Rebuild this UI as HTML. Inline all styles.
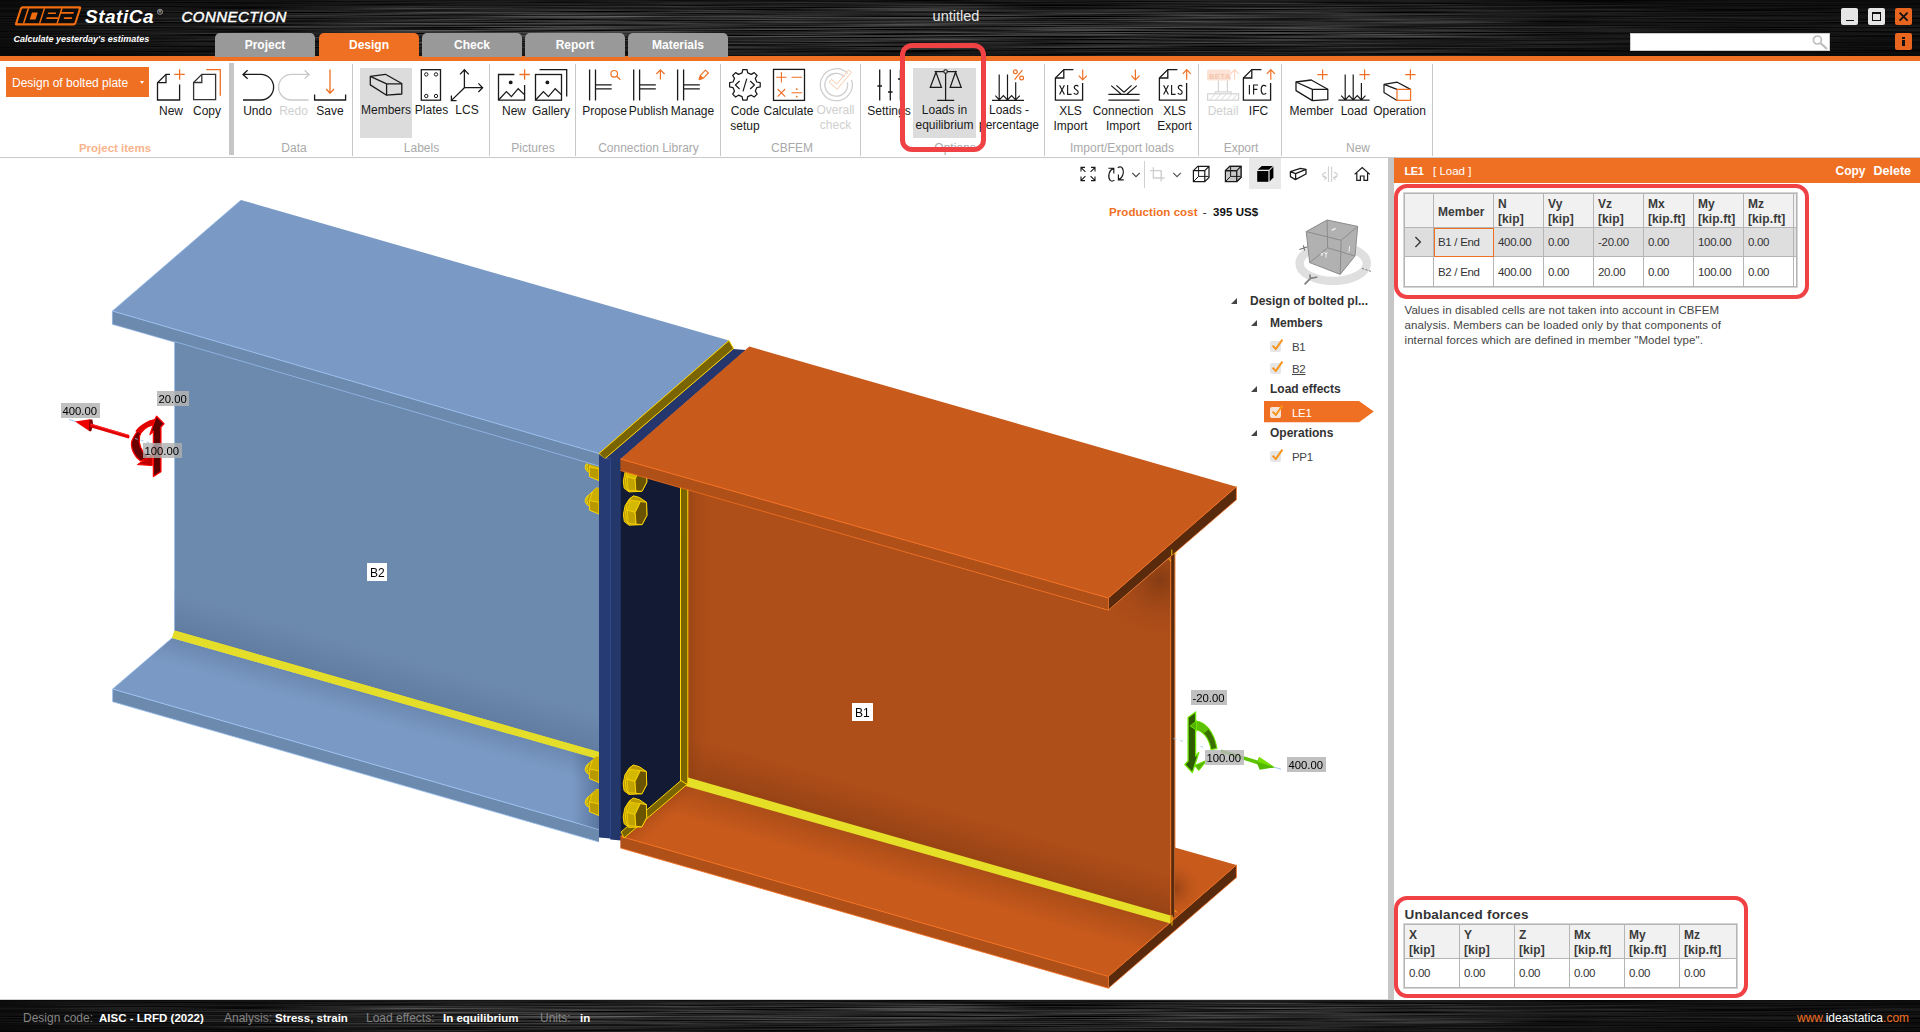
<!DOCTYPE html>
<html><head><meta charset="utf-8"><title>IDEA StatiCa Connection</title>
<style>
*{box-sizing:border-box;margin:0;padding:0}
html,body{width:1920px;height:1032px;overflow:hidden;background:#fff;font-family:"Liberation Sans",sans-serif;}
.abs{position:absolute}
#hdr{position:absolute;left:0;top:0;width:1920px;height:57px;background:#090909;
 background-image:
  repeating-linear-gradient(180deg,rgba(255,255,255,0) 0px,rgba(255,255,255,.085) 1px,rgba(255,255,255,0) 2px,rgba(255,255,255,.03) 3px,rgba(255,255,255,.07) 4px,rgba(255,255,255,0) 5px,rgba(255,255,255,.05) 6px,rgba(255,255,255,0) 7px,rgba(255,255,255,0) 8px,rgba(255,255,255,.1) 9px,rgba(255,255,255,0) 10px,rgba(255,255,255,0) 11px),
  radial-gradient(ellipse 560px 26px at 640px 24px,rgba(90,90,90,.5),rgba(20,20,20,0)),
  radial-gradient(ellipse 500px 20px at 1500px 30px,rgba(70,70,70,.35),rgba(20,20,20,0));}
#oline{position:absolute;left:0;top:56px;width:1920px;height:5px;background:#f07023}
.tab{position:absolute;top:33px;height:24px;width:100px;border-radius:5px 5px 0 0;background:#999;color:#fff;font-weight:bold;font-size:12px;text-align:center;line-height:24px}
.tab.on{background:#f07023}
#ribbon{position:absolute;left:0;top:61px;width:1920px;height:97px;background:#fff;border-bottom:1px solid #c9c9c9}
.sep{position:absolute;top:64px;width:1px;height:92px;background:#c8c8c8}
.glab{position:absolute;top:141px;height:14px;font-size:12px;line-height:14px;color:#a9a9a9;text-align:center;white-space:nowrap;transform:translateX(-50%)}
.rl{position:absolute;font-size:12px;color:#1a1a1a;text-align:center;white-space:nowrap;transform:translateX(-50%);line-height:15px}
.rl.dis{color:#cfcfcf}
#status{position:absolute;left:0;top:1000px;width:1920px;height:32px;background:#090909;
 background-image:
  repeating-linear-gradient(180deg,rgba(255,255,255,0) 0px,rgba(255,255,255,.085) 1px,rgba(255,255,255,0) 2px,rgba(255,255,255,.03) 3px,rgba(255,255,255,.07) 4px,rgba(255,255,255,0) 5px,rgba(255,255,255,.05) 6px,rgba(255,255,255,0) 7px,rgba(255,255,255,0) 8px,rgba(255,255,255,.1) 9px,rgba(255,255,255,0) 10px,rgba(255,255,255,0) 11px),
  radial-gradient(ellipse 560px 26px at 500px 16px,rgba(90,90,90,.5),rgba(20,20,20,0)),
  radial-gradient(ellipse 500px 20px at 1400px 18px,rgba(70,70,70,.35),rgba(20,20,20,0));}
#status span{position:absolute;top:10.5px;font-size:12px;white-space:nowrap;line-height:15px}
.sk{color:#858585}#status span.sv{color:#fff;font-weight:bold;font-size:11.5px}
#split{position:absolute;left:1388px;top:158px;width:6px;height:842px;background:#c6c6c6}
#phdr{position:absolute;left:1393.5px;top:158px;width:527px;height:24.5px;background:#f07023;color:#fff;font-size:12.5px;line-height:23px}
table.g{position:absolute;border-collapse:collapse;font-size:11.5px;letter-spacing:-.3px;color:#333;table-layout:fixed;border:1px solid #a6a6a6;box-shadow:0 0 0 1px #d4d4d4}
table.g td,table.g th{border:1px solid #b5b5b5;padding:0 0 0 4px;text-align:left;vertical-align:middle;overflow:hidden;white-space:nowrap}
table.g th{padding-top:2px;background:#f1f1f1;font-weight:bold;color:#3a3a3a;line-height:15px;font-size:12px;letter-spacing:.1px}
.redbox{position:absolute;border:3px solid #f04144;border-radius:12px}
.tree{position:absolute;font-size:12px;color:#333;white-space:nowrap;line-height:15px}
.tree.r{font-size:11.5px;letter-spacing:-.3px;color:#444}
.tree.b{font-weight:bold}
.tri{position:absolute;width:0;height:0;border-left:6px solid transparent;border-bottom:6px solid #444}
.cb{position:absolute;width:11px;height:11px;background:#e6e6e6;border-radius:2px}
</style></head><body>

<!-- HEADER -->
<div id="hdr"></div>

<!--HDR-START-->
<svg class="abs" style="left:0;top:0" width="1920" height="57" viewBox="0 0 1920 57">
<defs><filter id="brush" x="0" y="0" width="100%" height="100%" color-interpolation-filters="sRGB"><feTurbulence type="fractalNoise" baseFrequency="0.006 0.8" numOctaves="2" seed="7" result="n"/><feColorMatrix in="n" type="matrix" values="0.62 0 0 0 -0.15  0.62 0 0 0 -0.15  0.62 0 0 0 -0.15  0 0 0 0 1"/></filter>
<linearGradient id="hfade" x1="0" y1="0" x2="1" y2="0"><stop offset="0" stop-color="#050505" stop-opacity=".75"/><stop offset=".1" stop-color="#050505" stop-opacity=".45"/><stop offset=".22" stop-color="#050505" stop-opacity="0"/><stop offset=".7" stop-color="#050505" stop-opacity="0"/><stop offset=".82" stop-color="#050505" stop-opacity=".5"/><stop offset="1" stop-color="#050505" stop-opacity=".7"/></linearGradient>
<linearGradient id="vfade" x1="0" y1="0" x2="0" y2="1"><stop offset="0" stop-color="#050505" stop-opacity=".55"/><stop offset=".25" stop-color="#050505" stop-opacity="0"/><stop offset=".65" stop-color="#050505" stop-opacity="0"/><stop offset="1" stop-color="#050505" stop-opacity=".6"/></linearGradient></defs>
<rect width="1920" height="57" filter="url(#brush)"/><rect width="1920" height="57" fill="url(#hfade)"/><rect width="1920" height="57" fill="url(#vfade)"/></svg>
<svg class="abs" style="left:0;top:0" width="320" height="56" viewBox="0 0 320 56">
<g transform="translate(0,25.4) skewX(-18) translate(0,-25.4)">
<rect x="14.4" y="6.3" width="61.2" height="19.1" rx="2.2" fill="#f26d0f"/>
<rect x="16.6" y="8.5" width="56.9" height="14.7" rx="1" fill="#0c0c0c"/>
<rect x="22.1" y="8.3" width="1.6" height="15.1" fill="#f26d0f"/>
<rect x="27.8" y="12.6" width="5.8" height="6.8" fill="#f26d0f"/>
<rect x="38.2" y="8.3" width="1.5" height="15.1" fill="#f26d0f"/>
<rect x="44" y="12.4" width="8" height="1.7" fill="#f26d0f"/>
<rect x="44" y="17.2" width="11.8" height="1.7" fill="#f26d0f"/>
<rect x="55.6" y="8.3" width="1.6" height="15.1" fill="#f26d0f"/>
<rect x="57" y="12" width="12.6" height="1.7" fill="#f26d0f"/>
<rect x="61.6" y="17.2" width="8" height="1.7" fill="#f26d0f"/>
</g>
<text x="85" y="22.8" font-family="Liberation Sans, sans-serif" font-weight="bold" font-style="italic" font-size="19" fill="#fff" letter-spacing=".5">StatiCa</text>
<circle cx="160" cy="11.8" r="2.6" fill="none" stroke="#aaa" stroke-width=".8"/><text x="158.6" y="13.4" font-family="Liberation Sans, sans-serif" font-size="4" fill="#aaa" font-weight="bold">R</text>
<text x="181.5" y="21.6" font-family="Liberation Sans, sans-serif" font-style="italic" font-size="15" fill="#fff" stroke="#fff" stroke-width=".45" letter-spacing=".45">CONNECTION</text>
<text x="13.5" y="42.3" font-family="Liberation Sans, sans-serif" font-weight="bold" font-style="italic" font-size="9" fill="#fff">Calculate yesterday's estimates</text>
</svg>
<!-- window buttons -->
<div class="abs" style="left:1841px;top:8px;width:17px;height:17px;background:#e6e6e6;border-radius:2px"></div>
<div class="abs" style="left:1845.5px;top:19.5px;width:8.5px;height:1.6px;background:#111"></div>
<div class="abs" style="left:1868px;top:8px;width:17px;height:17px;background:#e6e6e6;border-radius:2px"></div>
<div class="abs" style="left:1872px;top:12px;width:9px;height:9px;border:1.2px solid #111;border-top-width:2.2px"></div>
<div class="abs" style="left:1895px;top:8px;width:17px;height:17px;background:#e8651f;border-radius:2px"></div>
<svg class="abs" style="left:1895px;top:8px" width="17" height="17"><path d="M4.6,4.6L12.6,12.6M12.6,4.6L4.6,12.6" stroke="#111" stroke-width="1.8"/></svg>
<div class="abs" style="left:1895px;top:33px;width:17px;height:17px;background:#e8651f;border-radius:2px"></div>
<div class="abs" style="left:1902.3px;top:36.6px;width:2.5px;height:2.3px;background:#111"></div>
<div class="abs" style="left:1902.3px;top:40.2px;width:2.5px;height:6px;background:#111"></div>
<div class="abs" style="left:1630px;top:33px;width:200px;height:17.5px;background:#fff;border:1px solid #ccc"></div>
<svg class="abs" style="left:1810px;top:33px" width="20" height="18"><circle cx="7.4" cy="7" r="4" fill="none" stroke="#bdbdbd" stroke-width="1.7"/><path d="M10.4,10L17,16" stroke="#bdbdbd" stroke-width="2.2"/></svg>
<!--HDR-END-->
<div id="oline"></div>
<div class="tab" style="left:215px">Project</div>
<div class="tab on" style="left:319px">Design</div>
<div class="tab" style="left:422px">Check</div>
<div class="tab" style="left:525px">Report</div>
<div class="tab" style="left:628px">Materials</div>
<div class="abs" style="left:906px;top:7px;width:100px;text-align:center;color:#e8e8e8;font-size:14.5px;line-height:18px">untitled</div>
<!-- RIBBON -->
<div id="ribbon"></div>
<!--RIB-START-->
<!-- ribbon backgrounds -->
<div class="abs" style="left:6px;top:67px;width:143px;height:30px;background:#f07023"></div>
<div class="abs" style="left:12px;top:75px;color:#fff;font-size:12px;line-height:16px;white-space:nowrap">Design of bolted plate</div>
<div class="abs" style="left:139.5px;top:81px;width:0;height:0;border-left:2.5px solid transparent;border-right:2.5px solid transparent;border-top:3px solid #fff"></div>
<div class="abs" style="left:229px;top:63px;width:5px;height:92px;background:#c6c6c6"></div>
<div class="abs" style="left:360px;top:68px;width:52px;height:70px;background:#dcdcdc"></div>
<div class="abs" style="left:913px;top:68px;width:63px;height:70px;background:#dcdcdc"></div>
<div class="sep" style="left:352px"></div><div class="sep" style="left:489px"></div><div class="sep" style="left:575px"></div>
<div class="sep" style="left:720px"></div><div class="sep" style="left:860px"></div><div class="sep" style="left:1044px"></div>
<div class="sep" style="left:1198px"></div><div class="sep" style="left:1281px"></div><div class="sep" style="left:1432px"></div>
<!-- group labels -->
<div class="glab" style="left:115px;color:#f8b48c;font-weight:bold;font-size:11.5px">Project items</div>
<div class="glab" style="left:294px">Data</div><div class="glab" style="left:421.5px">Labels</div><div class="glab" style="left:533px">Pictures</div>
<div class="glab" style="left:648.5px">Connection Library</div><div class="glab" style="left:792px">CBFEM</div><div class="glab" style="left:955px">Options</div>
<div class="glab" style="left:1122px">Import/Export loads</div><div class="glab" style="left:1241px">Export</div><div class="glab" style="left:1358px">New</div>
<!-- button labels -->
<div class="rl" style="left:171px;top:104px">New</div><div class="rl" style="left:207px;top:104px">Copy</div>
<div class="rl" style="left:257.5px;top:104px">Undo</div><div class="rl dis" style="left:293.5px;top:104px">Redo</div><div class="rl" style="left:330px;top:104px">Save</div>
<div class="rl" style="left:386px;top:103px">Members</div><div class="rl" style="left:431.5px;top:103px">Plates</div><div class="rl" style="left:467px;top:103px">LCS</div>
<div class="rl" style="left:514px;top:104px">New</div><div class="rl" style="left:551px;top:104px">Gallery</div>
<div class="rl" style="left:604.5px;top:104px">Propose</div><div class="rl" style="left:648.5px;top:104px">Publish</div><div class="rl" style="left:692.5px;top:104px">Manage</div>
<div class="rl" style="left:745px;top:104px">Code<br>setup</div><div class="rl" style="left:788.5px;top:104px">Calculate</div><div class="rl dis" style="left:835.5px;top:103px">Overall<br>check</div>
<div class="rl" style="left:889px;top:104px">Settings</div><div class="rl" style="left:944.5px;top:103px">Loads in<br>equilibrium</div><div class="rl" style="left:1009px;top:103px">Loads -<br>percentage</div>
<div class="rl" style="left:1070.5px;top:104px">XLS<br>Import</div><div class="rl" style="left:1123px;top:104px">Connection<br>Import</div><div class="rl" style="left:1174.5px;top:104px">XLS<br>Export</div>
<div class="rl dis" style="left:1223px;top:104px">Detail</div><div class="rl" style="left:1258.5px;top:104px">IFC</div>
<div class="rl" style="left:1311.5px;top:104px">Member</div><div class="rl" style="left:1354px;top:104px">Load</div><div class="rl" style="left:1399.5px;top:104px">Operation</div>
<!-- icons -->
<svg class="abs" style="left:0;top:61px" width="1920" height="97" viewBox="0 61 1920 97" fill="none" stroke="#1a1a1a" stroke-width="1.3" stroke-linecap="butt" stroke-linejoin="miter">
<g id="ic-new"><path d="M170,74.4H166L157.5,82.7V100H179.6V84.5"/><path d="M166,74.4V82.7H157.5"/><path d="M174.4,74.4H184.8M179.6,69.3V79.7" stroke="#f07023"/></g>
<g id="ic-copy"><path d="M201.8,74.4H215.6V99.6H193.6V82.5Z" stroke="#333"/><path d="M201.8,74.4V82.5H193.6" stroke="#333"/><path d="M206.3,69.6H220.3V95.8" stroke="#f07023"/></g>
<g id="ic-undo"><path d="M247.6,70.2L243,74.4L247.6,78.8M243,74.4H260.8A12.8,12.8 0 0 1 260.8,100H243"/></g>
<g id="ic-redo" stroke="#c9c9c9"><path d="M304.6,70.2L309.2,74.4L304.6,78.8M309.2,74.4H291.4A12.8,12.8 0 0 0 291.4,100H308.6"/></g>
<g id="ic-save"><path d="M314.6,94.6V100H345.6V94.6"/><path d="M330,69.4V93M326.2,89L330,93.2L334,89" stroke="#f07023"/></g>
<g id="ic-members" stroke-linejoin="round"><path d="M370.3,76.4L385.4,74.3L401.8,83.5V94L386.6,95.2L370.3,84.9Z"/><path d="M370.3,76.4L386.6,83.8H401.8M386.6,83.8V95.2"/></g>
<g id="ic-plates"><rect x="421.3" y="69.7" width="19.2" height="30.5"/><circle cx="426.3" cy="74.4" r="1.7" stroke-width="1"/><circle cx="436" cy="74.4" r="1.7" stroke-width="1"/><circle cx="426.3" cy="96" r="1.7" stroke-width="1"/><circle cx="436" cy="96" r="1.7" stroke-width="1"/></g>
<g id="ic-lcs"><path d="M464.4,87.7V69.8M460,74.4L464.4,69.7L468.8,74.4M464.4,87.7H482.4M478.4,83.4L482.6,87.7L478.4,92M464.4,87.7L451.5,100.4M451.4,95.6V100.6H456.6"/></g>
<g id="ic-picnew"><path d="M514.4,74.5H498.5V100.2H524.6V85"/><circle cx="510.7" cy="82.4" r="1.9" fill="#1a1a1a" stroke="none"/><path d="M498.8,99.8L506.4,91.6L511.4,96.6L518.2,88.7L524.4,94.6"/><path d="M519.4,74.5H529.8M524.6,69.3V79.8" stroke="#f07023"/></g>
<g id="ic-gallery"><rect x="535.5" y="74.5" width="26" height="25.7"/><circle cx="547.4" cy="82.4" r="1.9" fill="#1a1a1a" stroke="none"/><path d="M535.8,99.8L543.4,91.6L548.4,96.6L555.2,88.7L561.4,94.6"/><path d="M539.6,69.7H566.7V96.6"/></g>
<g id="ic-propose"><path d="M589.6,69.5V100.6M595.5,69.5V100.6M595.5,84.8H611.7M595.5,88.8H611.7"/><circle cx="614.2" cy="73.8" r="3.3" stroke="#f07023" stroke-width="1.2"/><path d="M616.6,76.2L620.4,79.8" stroke="#f07023" stroke-width="1.2"/></g>
<g id="ic-publish"><path d="M633.7,69.5V100.6M639.6,69.5V100.6M639.6,84.8H655.8M639.6,88.8H655.8"/><path d="M660.4,79.6V70M656.4,74L660.4,69.8L664.6,74" stroke="#f07023" stroke-width="1.2"/></g>
<g id="ic-manage"><path d="M677.6,69.5V100.6M683.6,69.5V100.6M683.6,84.8H699.8M683.6,88.8H699.8"/><path d="M699,79.6L700.2,75.6L705.4,70.2L708.4,73L703,78.4ZM700.2,75.6L703,78.4" stroke="#f07023" stroke-width="1.1" stroke-linejoin="round"/><path d="M699,79.6L700.2,75.6L703,78.4Z" fill="#f07023" stroke="none"/></g>
<g id="ic-code" stroke-linejoin="round"><path d="M742.1,72.9L742.8,69.5L747.0,69.5L747.7,72.9L751.3,74.4L754.2,72.6L757.1,75.5L755.3,78.4L756.8,82.0L760.2,82.7L760.2,86.9L756.8,87.6L755.3,91.2L757.1,94.1L754.2,97.0L751.3,95.2L747.7,96.7L747.0,100.1L742.8,100.1L742.1,96.7L738.5,95.2L735.6,97.0L732.7,94.1L734.5,91.2L733.0,87.6L729.6,86.9L729.6,82.7L733.0,82.0L734.5,78.4L732.7,75.5L735.6,72.6L738.5,74.4Z" stroke-width="1.25"/><path d="M739.6,81L735.4,85L739.6,89M750.2,81L754.4,85L750.2,89M746.8,78.6L743,91.4" stroke-width="1.2"/></g>
<g id="ic-calc"><rect x="773.5" y="69.4" width="31" height="31"/><path d="M776.2,77.2H786.6M781.4,72V82.4M791.6,77.2H802M777.6,89L785.2,96.6M785.2,89L777.6,96.6M791.6,92.8H802" stroke="#f07023" stroke-width="1.1"/><circle cx="796.8" cy="89.2" r=".9" fill="#f07023" stroke="none"/><circle cx="796.8" cy="96.6" r=".9" fill="#f07023" stroke="none"/></g>
<g id="ic-overall" stroke="#cfcfcf"><path d="M847.6,73.4A16,16 0 1 0 851.6,80"/><path d="M844.4,76.8A11.4,11.4 0 1 0 847.4,82.4"/><path d="M829.2,82.2L837.2,89.2L851.4,72.4L848.6,70L836.8,84L831.6,79.4Z" stroke="#f9c9ac" stroke-width="1"/></g>
<g id="ic-settings"><path d="M879.7,69.4V100.4M890.3,69.4V100.4M900.4,69.4V100.4M877.4,86H882M888,92H892.6M898,79H902.6"/></g>
<g id="ic-equil" stroke-width="1.25"><path d="M945.6,73.4V100.2M937.2,100.4H954.2M934.6,71.6H943.8M947.4,71.6H956.8"/><circle cx="945.6" cy="71.6" r="1.8" stroke-width="1.1"/><path d="M936,72.2L930.3,87.4H941.4ZM955.5,72.2L950.2,87.4H961.2Z" stroke-linejoin="miter"/></g>
<g id="ic-loadpct"><path d="M992,100.4H1024M999.2,74.4V99.6M1007.5,74.4V99.6M1015.7,82.2V99.6M995.4,95.6L999.2,99.8L1003.4,95.6L1007.5,99.8L1011.6,95.6L1015.7,99.8L1019.8,95.6" stroke-width="1.2"/><path d="M1022.4,70.2L1014.6,79.6" stroke="#f07023" stroke-width="1.2"/><circle cx="1015.4" cy="71.8" r="1.9" stroke="#f07023" stroke-width="1.2"/><circle cx="1021.6" cy="78" r="1.9" stroke="#f07023" stroke-width="1.2"/></g>
<g id="ic-xlsimp"><path d="M1073.4,69.6H1063.8L1055.4,78V100.2H1082.6V83"/><path d="M1063.8,69.6V78H1055.4"/><path d="M1082.7,69.6V79.4M1078.8,75.6L1082.7,79.8L1086.8,75.6" stroke="#f07023" stroke-width="1.2"/><path d="M1059.6,85.2L1064.4,94.4M1064.4,85.2L1059.6,94.4M1067.6,85V94.4H1071.6M1078.4,86.4Q1077,85 1075.4,85.6Q1073.6,86.6 1074.6,88.4L1077.8,91Q1078.8,93.4 1076.6,94.2Q1075,94.6 1073.8,93.2" stroke-width="1.15"/></g>
<g id="ic-connimp"><path d="M1108.4,94.4H1139.6M1108.4,100.2H1139.6M1111.2,85.6L1121,94M1116.4,85.4L1124,92.2M1136.8,85.6L1127,94M1131.6,85.4L1124,92.2" stroke-width="1.2"/><path d="M1135.4,69.6V79.4M1131.4,75.6L1135.4,79.8L1139.6,75.6" stroke="#f07023" stroke-width="1.2"/></g>
<g id="ic-xlsexp"><path d="M1177.4,69.6H1167.8L1159.4,78V100.2H1186.6V83"/><path d="M1167.8,69.6V78H1159.4"/><path d="M1186.7,79.8V70M1182.8,73.8L1186.7,69.6L1190.8,73.8" stroke="#f07023" stroke-width="1.2"/><path d="M1163.6,85.2L1168.4,94.4M1168.4,85.2L1163.6,94.4M1171.6,85V94.4H1175.6M1182.4,86.4Q1181,85 1179.4,85.6Q1177.6,86.6 1178.6,88.4L1181.8,91Q1182.8,93.4 1180.6,94.2Q1179,94.6 1177.8,93.2" stroke-width="1.15"/></g>
<g id="ic-detail" stroke="#d6d6d6"><rect x="1207" y="69.4" width="24" height="11" rx="2" fill="#fbe3d6" stroke="none"/><path d="M1234.6,79.8V70M1230.8,73.8L1234.6,69.6L1238.6,73.8" stroke="#fbd3bd" stroke-width="1.1"/><path d="M1218.4,80.6V91.6M1227.4,80.6V91.6M1215,91.8H1231V93.6M1215,91.8V93.6"/><rect x="1207.6" y="93.8" width="31" height="6.4"/><path d="M1210,100L1215,94M1215.6,100L1220.6,94M1221.2,100L1226.2,94M1226.8,100L1231.8,94M1232.4,100L1237.4,94" stroke-width=".9"/></g>
<g id="ic-ifc"><path d="M1261.4,69.6H1251.8L1243.4,78V100.2H1270.6V83"/><path d="M1251.8,69.6V78H1243.4"/><path d="M1270.8,79.8V70M1266.8,73.8L1270.8,69.6L1274.8,73.8" stroke="#f07023" stroke-width="1.2"/><path d="M1249.4,85V94.4M1253.6,94.4V85H1258M1253.6,89.4H1257.4M1266.2,86.4Q1264.8,85 1263.2,85.4Q1261.2,86.2 1261.2,89.6Q1261.2,93.4 1263.2,94.2Q1264.8,94.6 1266.2,93.2" stroke-width="1.15"/></g>
<g id="ic-member2" stroke-linejoin="round"><path d="M1296,82L1311.2,80L1327.8,89.2V99.6L1312.4,100.6L1296,90.6Z"/><path d="M1296,82L1312.4,89.4H1327.8M1312.4,89.4V100.6"/><path d="M1317.4,74.6H1327.8M1322.6,69.4V79.8" stroke="#f07023" stroke-width="1.2"/></g>
<g id="ic-load2"><path d="M1338.4,100.2H1369.6M1345.2,74.6V99.6M1353.2,74.6V99.6M1361.4,83V99.6M1341.2,95.6L1345.2,99.8L1349.2,95.6L1353.2,99.8L1357.3,95.6L1361.4,99.8L1365.5,95.6" stroke-width="1.2"/><path d="M1359.4,74.6H1369.8M1364.6,69.4V79.8" stroke="#f07023" stroke-width="1.2"/></g>
<g id="ic-oper" stroke-linejoin="round"><path d="M1397,89.4L1384,84.4V92.4L1397,100.4M1384,84.4L1397.2,82.2L1410.6,89.4" stroke-width="1.2"/><rect x="1397" y="89.4" width="13.6" height="11" stroke="#f07023" stroke-width="1.2"/><path d="M1405.2,74.6H1415.6M1410.4,69.4V79.8" stroke="#f07023" stroke-width="1.2"/></g>
<text x="1209" y="78.6" font-family="Liberation Sans, sans-serif" font-size="7.5" font-weight="bold" fill="#f3c4ab" stroke="none" letter-spacing=".4">BETA</text>
</svg>
<div class="redbox" style="left:900px;top:43px;width:86px;height:109px;border-width:5px;border-radius:12px"></div>
<!--RIB-END-->

<!-- VIEWPORT / SCENE -->
<div id="scene" class="abs" style="left:0;top:158px;width:1388px;height:842px;background:#fff;border-bottom:1px solid #d0d0d0"></div>

<!--SCENE-START-->
<svg class="abs" style="left:0;top:158px" width="1388" height="842" viewBox="0 158 1388 842" shape-rendering="geometricPrecision">
<defs>
<linearGradient id="gBweb" gradientUnits="userSpaceOnUse" x1="410" y1="660" x2="400" y2="695"><stop offset="0" stop-color="#6c89ae"/><stop offset="1" stop-color="#627da2"/></linearGradient>
<linearGradient id="gBfl" gradientUnits="userSpaceOnUse" x1="400" y1="702" x2="393" y2="727"><stop offset="0" stop-color="#6b88b0"/><stop offset="1" stop-color="#7a9ac5"/></linearGradient>
<linearGradient id="gOweb" gradientUnits="userSpaceOnUse" x1="911" y1="800" x2="900" y2="838"><stop offset="0" stop-color="#ae4e19"/><stop offset="1" stop-color="#984315"/></linearGradient>
<linearGradient id="gOfl" gradientUnits="userSpaceOnUse" x1="900" y1="847" x2="891" y2="878"><stop offset="0" stop-color="#ac4d18"/><stop offset="1" stop-color="#c85a1c"/></linearGradient>
<linearGradient id="gOwebL" gradientUnits="userSpaceOnUse" x1="688" y1="0" x2="712" y2="0"><stop offset="0" stop-color="#8f3f13" stop-opacity=".6"/><stop offset="1" stop-color="#ae4e19" stop-opacity="0"/></linearGradient>
<linearGradient id="gOflD" gradientUnits="userSpaceOnUse" x1="654" y1="809" x2="668" y2="826"><stop offset="0" stop-color="#a04615" stop-opacity=".8"/><stop offset="1" stop-color="#c85a1c" stop-opacity="0"/></linearGradient>
<radialGradient id="gSh1" gradientUnits="userSpaceOnUse" cx="1160" cy="580" r="62"><stop offset="0" stop-color="#7c3711" stop-opacity=".8"/><stop offset="1" stop-color="#ae4e19" stop-opacity="0"/></radialGradient>
<radialGradient id="gSh2" gradientUnits="userSpaceOnUse" cx="1174" cy="888" r="30"><stop offset="0" stop-color="#8a3d13" stop-opacity=".85"/><stop offset="1" stop-color="#c85a1c" stop-opacity="0"/></radialGradient>

<linearGradient id="gBsh" gradientUnits="userSpaceOnUse" x1="572" y1="0" x2="599" y2="0"><stop offset="0" stop-color="#3a5278" stop-opacity="0"/><stop offset="1" stop-color="#3a5278" stop-opacity=".5"/></linearGradient>
</defs>
<!-- BLUE BEAM B2 -->
<polygon points="241,200 729,340.5 599,453.5 112.4,311" fill="#7a9ac5"/>
<polygon points="112.4,311 599,453.5 599,467 174.5,342 112.4,324.3" fill="#6c89ae"/>
<polygon points="174.5,341 599,466 599,756 174.5,631" fill="#6c89ae"/>
<polygon points="174.5,590 599,711 599,756 174.5,631" fill="url(#gBweb)"/>
<g transform="translate(585,454.4)"><path d="M11.3,0 L14,0.4 L14,26.2 L4.4,22.2 L4.4,17.9 L2.2,17 L0,13.5 L1.3,9.2 L7.4,3.9 Z" fill="#b89a00" stroke="#ffd800" stroke-width="1" stroke-linejoin="round"/>
<polygon points="7.4,3.9 11.3,0 14,0.4 14,14.4 4.4,12.6" fill="#ccae00"/>
<path d="M4.4,12.6 L14,14.4 M7.4,3.9 L4.4,12.6 L4.4,17.9" fill="none" stroke="#ffd800" stroke-width=".8"/>
<path d="M3.4,7.6 L1.8,12 L2.8,16" fill="none" stroke="#e0e020" stroke-width="1"/></g><g transform="translate(585,487.9)"><path d="M11.3,0 L14,0.4 L14,26.2 L4.4,22.2 L4.4,17.9 L2.2,17 L0,13.5 L1.3,9.2 L7.4,3.9 Z" fill="#b89a00" stroke="#ffd800" stroke-width="1" stroke-linejoin="round"/>
<polygon points="7.4,3.9 11.3,0 14,0.4 14,14.4 4.4,12.6" fill="#ccae00"/>
<path d="M4.4,12.6 L14,14.4 M7.4,3.9 L4.4,12.6 L4.4,17.9" fill="none" stroke="#ffd800" stroke-width=".8"/>
<path d="M3.4,7.6 L1.8,12 L2.8,16" fill="none" stroke="#e0e020" stroke-width="1"/></g>
<polygon points="112.4,311 599,453.5 599,467 174.5,342 112.4,324.3" fill="#6c89ae"/>
<polygon points="174.5,630.5 599,752 599,759.5 172,638" fill="#e4de2a"/>
<polyline points="112.4,311 599,453.5" fill="none" stroke="#9cc0ee" stroke-width="1"/>
<polyline points="174.5,341.5 599,466" fill="none" stroke="#8db2e2" stroke-width="1"/>
<polygon points="172,638 599,759 599,829.5 112.6,689" fill="url(#gBfl)"/>
<polygon points="112.6,689 599,829.5 599,842 112.6,701.7" fill="#6c89ae"/>
<polyline points="112.6,689 599,829.5" fill="none" stroke="#9cc0ee" stroke-width="1"/>
<polyline points="112.6,701.7 599,842" fill="none" stroke="#9cc0ee" stroke-width=".8"/>
<polygon points="174.5,630.5 599,752 599,759.5 172,638" fill="#e4de2a"/>
<polygon points="560,748.5 599,759.5 599,829.5 560,818.2" fill="url(#gBsh)"/>
<g transform="translate(585,756.4)"><path d="M11.3,0 L14,0.4 L14,26.2 L4.4,22.2 L4.4,17.9 L2.2,17 L0,13.5 L1.3,9.2 L7.4,3.9 Z" fill="#b89a00" stroke="#ffd800" stroke-width="1" stroke-linejoin="round"/>
<polygon points="7.4,3.9 11.3,0 14,0.4 14,14.4 4.4,12.6" fill="#ccae00"/>
<path d="M4.4,12.6 L14,14.4 M7.4,3.9 L4.4,12.6 L4.4,17.9" fill="none" stroke="#ffd800" stroke-width=".8"/>
<path d="M3.4,7.6 L1.8,12 L2.8,16" fill="none" stroke="#e0e020" stroke-width="1"/></g><g transform="translate(585,789.4)"><path d="M11.3,0 L14,0.4 L14,26.2 L4.4,22.2 L4.4,17.9 L2.2,17 L0,13.5 L1.3,9.2 L7.4,3.9 Z" fill="#b89a00" stroke="#ffd800" stroke-width="1" stroke-linejoin="round"/>
<polygon points="7.4,3.9 11.3,0 14,0.4 14,14.4 4.4,12.6" fill="#ccae00"/>
<path d="M4.4,12.6 L14,14.4 M7.4,3.9 L4.4,12.6 L4.4,17.9" fill="none" stroke="#ffd800" stroke-width=".8"/>
<path d="M3.4,7.6 L1.8,12 L2.8,16" fill="none" stroke="#e0e020" stroke-width="1"/></g>
<path id="silh" d="M112.4,324.3L174.5,342.2V631M112.4,311V324.3M112.6,689V701.7M241,200L112.4,311M112.6,689L172,638" fill="none" stroke="#9cc0ee" stroke-width=".7"/>
<!-- PLATES -->
<polygon points="605,458.5 733,349 746,350 620.4,459.5" fill="#24366c"/>
<polygon points="599,453.5 729,340.5 733.5,348.5 604.5,459" fill="#7a6400" stroke="#ffd400" stroke-width="1"/>
<polygon points="599,454 604.5,458.5 611,458.5 611,838.5 599,837.5" fill="#263a73"/>
<polygon points="610.3,458.5 621,458.5 621,840.5 610.3,839.5" fill="#24376b"/>
<line x1="610.4" y1="459" x2="610.4" y2="839" stroke="#30498c" stroke-width="1"/>
<polygon points="620.8,465 680.5,483 680.5,785 620.8,837" fill="#131b34"/>
<!-- ORANGE BEAM B1 -->
<polygon points="687.8,489 1108.4,610.2 1170.5,557 1170.5,921 686,782" fill="#ae4e19"/>
<polygon points="687.8,730 1170.5,869 1170.5,921 686,782" fill="url(#gOweb)"/>
<polygon points="687.8,489 740,504 740,797.5 686,782" fill="url(#gOwebL)"/>
<polygon points="1030,588 1108.4,610.2 1170.5,557 1170.5,700 1030,700" fill="url(#gSh1)"/>
<rect x="1170.5" y="553" width="4.3" height="369" fill="#5a2a0d"/>
<line x1="1170.7" y1="557" x2="1170.7" y2="921" stroke="#f36f1f" stroke-width="1"/>
<line x1="1175" y1="553" x2="1175" y2="918" stroke="#f36f1f" stroke-width=".8"/>
<polygon points="1150,917 1174.8,917 1174.8,847.5 1236.4,865 1108.4,976.4 1095,972.5" fill="#c85a1c"/>
<polygon points="620.4,836.3 686,782 1170.5,921 1108.4,976.4" fill="url(#gOfl)"/>
<polygon points="1174.8,847.5 1236.4,865 1174.8,918" fill="url(#gSh2)"/>
<polygon points="620.4,836.3 686,782 760,803 700,859" fill="url(#gOflD)"/>
<polygon points="620.4,836.3 1108.4,976.4 1108.4,988.2 620.4,848" fill="#b05019"/>
<polygon points="1108.4,976.4 1236.4,865 1236.4,877.5 1108.4,988.2" fill="#5a2a0d"/>
<polyline points="620.4,836.3 1108.4,976.4 1236.4,865" fill="none" stroke="#f36f1f" stroke-width="1"/>
<polyline points="620.4,848 1108.4,988.2 1236.4,877.5 1236.4,865" fill="none" stroke="#f36f1f" stroke-width=".8"/>
<line x1="1108.4" y1="976.4" x2="1108.4" y2="988.2" stroke="#f36f1f" stroke-width=".8"/>
<polygon points="688,777.5 1170.5,915.5 1170.5,923.5 684,785.5" fill="#e6df28"/>
<!-- welds around plate -->
<rect x="680.5" y="484" width="7.3" height="300" fill="#7a6400" stroke="#ffd400" stroke-width="1"/>
<polygon points="621,832 681,780.5 687,784.5 624,838" fill="#7a6400" stroke="#ffd400" stroke-width="1"/>
<g transform="translate(623.3,462.5)"><path d="M10,0 L16.1,1.7 L23.1,6.5 L23.5,19.6 L18.7,28.8 L5.7,29.4 L0.9,25.7 L0,18.7 L1.7,10 L5.7,3.5 Z" fill="#b89a00" stroke="#ffd800" stroke-width="1" stroke-linejoin="round"/>
<path d="M7.6,1.8 L3.6,9 L2.2,18 L3,25 L5.7,28.6" fill="none" stroke="#ffd800" stroke-width=".9"/>
<polygon points="7.4,4.4 17,5.7 11.8,16.6 3.9,14.4" fill="#d4b800" stroke="#ffd800" stroke-width=".7"/>
<polygon points="3.9,14.4 11.8,16.6 12.6,28.3 4.8,27.5" fill="#c0a200" stroke="#ffd800" stroke-width=".7"/>
<polygon points="17,5.7 23.1,6.5 23.5,19.6 18.7,28.8 12.6,28.3 11.8,16.6" fill="#6a5400" stroke="#ffd800" stroke-width=".9"/></g><g transform="translate(623.4,495.8)"><path d="M10,0 L16.1,1.7 L23.1,6.5 L23.5,19.6 L18.7,28.8 L5.7,29.4 L0.9,25.7 L0,18.7 L1.7,10 L5.7,3.5 Z" fill="#b89a00" stroke="#ffd800" stroke-width="1" stroke-linejoin="round"/>
<path d="M7.6,1.8 L3.6,9 L2.2,18 L3,25 L5.7,28.6" fill="none" stroke="#ffd800" stroke-width=".9"/>
<polygon points="7.4,4.4 17,5.7 11.8,16.6 3.9,14.4" fill="#d4b800" stroke="#ffd800" stroke-width=".7"/>
<polygon points="3.9,14.4 11.8,16.6 12.6,28.3 4.8,27.5" fill="#c0a200" stroke="#ffd800" stroke-width=".7"/>
<polygon points="17,5.7 23.1,6.5 23.5,19.6 18.7,28.8 12.6,28.3 11.8,16.6" fill="#6a5400" stroke="#ffd800" stroke-width=".9"/></g><g transform="translate(623.2,765)"><path d="M10,0 L16.1,1.7 L23.1,6.5 L23.5,19.6 L18.7,28.8 L5.7,29.4 L0.9,25.7 L0,18.7 L1.7,10 L5.7,3.5 Z" fill="#b89a00" stroke="#ffd800" stroke-width="1" stroke-linejoin="round"/>
<path d="M7.6,1.8 L3.6,9 L2.2,18 L3,25 L5.7,28.6" fill="none" stroke="#ffd800" stroke-width=".9"/>
<polygon points="7.4,4.4 17,5.7 11.8,16.6 3.9,14.4" fill="#d4b800" stroke="#ffd800" stroke-width=".7"/>
<polygon points="3.9,14.4 11.8,16.6 12.6,28.3 4.8,27.5" fill="#c0a200" stroke="#ffd800" stroke-width=".7"/>
<polygon points="17,5.7 23.1,6.5 23.5,19.6 18.7,28.8 12.6,28.3 11.8,16.6" fill="#6a5400" stroke="#ffd800" stroke-width=".9"/></g><g transform="translate(623.2,798)"><path d="M10,0 L16.1,1.7 L23.1,6.5 L23.5,19.6 L18.7,28.8 L5.7,29.4 L0.9,25.7 L0,18.7 L1.7,10 L5.7,3.5 Z" fill="#b89a00" stroke="#ffd800" stroke-width="1" stroke-linejoin="round"/>
<path d="M7.6,1.8 L3.6,9 L2.2,18 L3,25 L5.7,28.6" fill="none" stroke="#ffd800" stroke-width=".9"/>
<polygon points="7.4,4.4 17,5.7 11.8,16.6 3.9,14.4" fill="#d4b800" stroke="#ffd800" stroke-width=".7"/>
<polygon points="3.9,14.4 11.8,16.6 12.6,28.3 4.8,27.5" fill="#c0a200" stroke="#ffd800" stroke-width=".7"/>
<polygon points="17,5.7 23.1,6.5 23.5,19.6 18.7,28.8 12.6,28.3 11.8,16.6" fill="#6a5400" stroke="#ffd800" stroke-width=".9"/></g>
<!-- top flange orange -->
<polygon points="620.4,459 749.3,346.5 1236.4,486.7 1108.4,598" fill="#c85a1c"/>
<polygon points="620.4,459 1108.4,598 1108.4,610.2 620.4,470.5" fill="#b05019"/>
<polygon points="1108.4,598 1236.4,486.7 1236.4,499.7 1108.4,610.2" fill="#5a2a0d"/>
<polyline points="620.4,459 1108.4,598 1236.4,486.7" fill="none" stroke="#f36f1f" stroke-width="1"/>
<polyline points="620.4,470.5 1108.4,610.2 1236.4,499.7 1236.4,486.7" fill="none" stroke="#f36f1f" stroke-width=".8"/>
<line x1="1108.4" y1="598" x2="1108.4" y2="610.2" stroke="#f36f1f" stroke-width=".8"/>

<!-- RED LOADS -->
<g>
<line x1="69" y1="419.5" x2="76" y2="421.6" stroke="#9cc4f0" stroke-width="1"/>
<polygon points="75,421.6 90,419.2 92.8,425 90,431.6" fill="#ee0000"/>
<polygon points="89.6,419.4 92.4,419.6 93.2,425.5 91,431.4 88.8,430.4" fill="#7a0000"/>
<polygon points="90.5,423.6 128.8,434.9 127.8,438.3 89.6,427.1" fill="#e00000"/>
<line x1="90.5" y1="424" x2="128.6" y2="435.3" stroke="#ff2a2a" stroke-width="1.2"/>
<ellipse cx="128.3" cy="436.6" rx="1.2" ry="1.9" fill="#ff0000"/>
<path d="M156.6,419.4 C146,420 135.3,431.2 131.6,441.8 C130.5,450 136,458 140.6,461 L148,457.8 C142,452 138,444 139.6,436 C142,429 148,426 152.6,424.8 Z" fill="#6a0000" stroke="#ff0000" stroke-width="1.2"/>
<path d="M156.6,419.4 C146,420 139,426 135.3,431.2 L140.6,433.5 C144,428 148,426 152.6,424.8 Z" fill="#e00000"/>
<polygon points="137.4,464.6 152.3,454.6 152.3,465.6" fill="#c00000" stroke="#ff0000" stroke-width="1"/>
<polygon points="156.6,416.2 164,423.7 160.9,427 160.9,471.7 153.4,476.5 153.4,431 150,434.5 155.3,418.5" fill="#5a0000" stroke="#ff0000" stroke-width="1.3" stroke-linejoin="round"/>
<line x1="135" y1="438.5" x2="171" y2="449" stroke="#9cc4f0" stroke-width=".8" stroke-dasharray="3 3"/>
</g>
<!-- GREEN LOADS -->
<g>
<line x1="1173.5" y1="738.5" x2="1206" y2="748" stroke="#9cc4f0" stroke-width=".8" stroke-dasharray="3 4"/>
<polygon points="1188.1,717.5 1195.6,712 1195.6,756 1198.8,752.5 1192.4,772.6 1184.9,764.5 1188.1,761" fill="#2e5a00" stroke="#6fe600" stroke-width="1.3" stroke-linejoin="round"/>
<path d="M1195.6,721 C1205,722 1214,731 1217,748.5 L1211,749.5 C1209,738 1203,731 1196.1,729.6 Z" fill="#3a7000" stroke="#6fe600" stroke-width="1.1"/>
<path d="M1195.6,721 C1200,721.5 1206,725 1209,729 L1204.5,733 C1202,731 1199,730 1196.1,729.6 Z" fill="#5fc000"/>
<polygon points="1190.2,726 1196.6,721 1196.6,730.2" fill="#55b000" stroke="#6fe600" stroke-width="1"/>
<polygon points="1194.5,765.4 1207.3,760 1198.8,770.6" fill="#58b400" stroke="#6fe600" stroke-width="1"/>
<polygon points="1221.2,749.4 1258.6,760.8 1257.8,764.4 1220.6,752.6" fill="#5cc400"/>
<polygon points="1259,757 1275,767.4 1259.6,769.8 1257,763" fill="#52b800"/>
<polygon points="1259,757 1275,767.4 1258,762" fill="#78e000"/>
<line x1="1275" y1="767.4" x2="1281" y2="769.2" stroke="#9cc4f0" stroke-width="1"/>
</g>
<path d="M1171.8,549.6V555.4M1174.6,553.4H1177M1168.4,558.6L1171,561.2" stroke="#ffd800" stroke-width=".9" fill="none"/><path d="M1172,915V925.5M1174.6,910.6L1176.6,912" stroke="#ffd800" stroke-width=".9" fill="none"/>
<!-- value labels -->
<g font-family="Liberation Sans, sans-serif" font-size="11.3" fill="#000" opacity=".995">
<rect x="61" y="403" width="39" height="15" fill="#c0c0c0"/><text x="62.5" y="414.5">400.00</text>
<rect x="157" y="391" width="32" height="15" fill="#b4b4b4" fill-opacity=".85"/><text x="158.5" y="402.5">20.00</text>
<rect x="143" y="443" width="39" height="15" fill="#b0b0b0" fill-opacity=".8"/><text x="144.5" y="454.5">100.00</text>
<rect x="1191" y="690" width="36" height="15" fill="#c0c0c0"/><text x="1192.5" y="701.5">-20.00</text>
<rect x="1205" y="750" width="39" height="15" fill="#b8b8b8" fill-opacity=".85"/><text x="1206.5" y="761.5">100.00</text>
<rect x="1287" y="757" width="39" height="15" fill="#c0c0c0"/><text x="1288.5" y="768.5">400.00</text>
<rect x="367" y="563" width="20" height="18" fill="#fff"/><text x="370" y="576.5" font-size="12">B2</text>
<rect x="852" y="703" width="21" height="18" fill="#fff"/><text x="855" y="716.5" font-size="12">B1</text>
</g>
</svg>
<!--SCENE-END-->

<!--OVL-START-->
<!-- scene toolbar -->
<div class="abs" style="left:1249px;top:158px;width:32px;height:31px;background:#e9e9e9"></div>
<div class="abs" style="left:1144px;top:161px;width:1px;height:27px;background:#d0d0d0"></div>
<svg class="abs" style="left:1070px;top:158px" width="318" height="34" viewBox="1070 158 318 34" fill="none" stroke="#1a1a1a" stroke-width="1.2">
<path d="M1081,171.4V167.4H1085M1081.2,167.6L1085.4,171.8M1091,167.4H1095V171.4M1094.8,167.6L1090.6,171.8M1081,176.6V180.6H1085M1081.2,180.4L1085.4,176.2M1091,180.6H1095V176.6M1094.8,180.4L1090.6,176.2" stroke-width="1.1"/>
<path d="M1113.6,168.4C1109,170 1107.4,176.6 1110.2,180.4C1111.6,181.6 1113.6,181 1114.4,180M1108.4,168.2H1113.8V173.4M1118.6,179.6C1123.4,177.6 1124.6,171 1121.8,167.4C1120.6,166.4 1118.6,166.8 1117.8,168M1123.8,179.8H1118.4V174.6" stroke-width="1.15"/>
<path d="M1132.2,172.8L1136,176.6L1139.8,172.8" stroke="#444"/>
<path d="M1153.4,167.2V178H1164.6M1150,170.6H1161.2V181.4" stroke="#cfcfcf" stroke-width="1.4"/>
<path d="M1173.2,172.8L1177,176.6L1180.8,172.8" stroke="#555"/>
<g id="wcube"><path d="M1193.4,170.6H1204.8V181.6H1193.4ZM1193.4,170.6L1197.8,166.4H1209V177.4L1204.8,181.6M1204.8,170.6L1209,166.4" stroke-width="1.2"/><path d="M1198.6,166.6V176.4H1208.6M1198.6,176.4L1193.8,181.2" stroke-width="1"/></g>
<g><path d="M1225.4,170.6H1236.8V181.6H1225.4ZM1225.4,170.6L1229.8,166.4H1241V177.4L1236.8,181.6M1236.8,170.6L1241,166.4" fill="#c9c9c9" stroke-width="1.2"/><path d="M1225.4,170.6L1229.8,166.4H1241V177.4L1236.8,181.6V170.6Z" fill="#c9c9c9" stroke="none"/><path d="M1225.4,170.6H1236.8V181.6M1236.8,170.6L1241,166.4M1225.4,170.6L1229.8,166.4H1241V177.4L1236.8,181.6" stroke-width="1.2"/><path d="M1230.6,166.6V176.4H1240.6M1230.6,176.4L1225.8,181.2" stroke-width="1"/></g>
<g fill="#000" stroke="none"><path d="M1257.2,171H1268.4V181.8H1257.2Z"/><path d="M1257.6,169.8L1261.8,166H1273L1268.8,169.8Z"/><path d="M1269.6,170.4L1273.4,166.8V177.6L1269.6,181.4Z"/></g>
<path d="M1290.4,171.6L1300.4,168.4L1306,169.4V174L1295.4,179.6L1290.4,176.6ZM1290.4,171.6L1295.6,173.6L1306,169.4M1295.6,173.6V179.4" stroke-width="1.3" stroke-linejoin="round"/>
<path d="M1328.4,166.4V182M1331.6,166.4V182M1326,172.4C1321.6,173.4 1321.6,176.4 1325.6,177.6M1334,172.4C1338.4,173.4 1338.4,176.4 1334.4,177.6M1324,176L1326.4,177.8L1324.4,179.8M1336,176L1333.6,177.8L1335.6,179.8" stroke="#cfcfcf" stroke-width="1.1"/>
<path d="M1354.6,174.4L1362.2,167.6L1369.8,174.4M1356.8,173V180.4H1360.4V176H1364V180.4H1367.6V173" stroke-width="1.2"/>
</svg>
<div class="abs" style="left:1109px;top:204.6px;font-size:11.5px;font-weight:bold;color:#f07023;white-space:nowrap;line-height:15px;letter-spacing:.07px">Production cost <span style="color:#111;font-weight:normal;margin-left:2px;margin-right:3px">-</span> <span style="color:#111">395 US$</span></div>
<!-- nav cube -->
<svg class="abs" style="left:1285px;top:212px" width="100" height="80" viewBox="1285 212 100 80">
<ellipse cx="1333.2" cy="263.4" rx="33.6" ry="17.6" fill="none" stroke="#dfdfdf" stroke-width="8.4"/>
<polygon points="1306.2,231.6 1327.1,220 1357.7,226.4 1355,256 1340.2,274.4 1309.7,262.6" fill="#b1b1b1"/>
<path d="M1306.2,231.6L1327.1,220L1357.7,226.4L1355,256L1340.2,274.4L1309.7,262.6ZM1306.2,231.6L1341.1,240.3L1357.7,226.4M1341.1,240.3L1340.2,274.4M1327.1,220L1327.6,247.8L1309.7,262.6M1327.6,247.8L1355,256" fill="none" stroke="#8b8b8b" stroke-width="1" stroke-linejoin="round"/>
<path d="M1304.6,284.4L1310.4,278.4L1309.8,274.6M1310.4,278.4L1317.4,277" fill="none" stroke="#808080" stroke-width="1.7"/>
<path d="M1299.4,249.4L1307.6,246.8M1303.4,245.4L1304.6,250.6" stroke="#6e6e6e" stroke-width="1.1"/>
<path d="M1362,268.4L1372.4,271.8" stroke="#777" stroke-width="1" stroke-dasharray="2.2 1.4"/>
<path d="M1320.8,253.2L1323,255.4M1323,252.4L1321,255.8M1324.4,252L1326,254.2L1327.6,252.2M1326,254.2V257.6" stroke="#f2f2f2" stroke-width="1" fill="none"/>
<path d="M1331.6,230.4L1335.6,228.4" stroke="#f2f2f2" stroke-width="1.2"/><path d="M1349.6,246.2L1349,251.6M1347.4,252.4L1348.2,252.2" stroke="#f2f2f2" stroke-width="1"/>
</svg>
<!-- tree -->
<div class="tri" style="left:1231px;top:298px"></div><div class="tree b" style="left:1250px;top:293.8px">Design of bolted pl...</div>
<div class="tri" style="left:1251px;top:320px"></div><div class="tree b" style="left:1270px;top:315.8px">Members</div>
<div class="cb" style="left:1270px;top:341px"></div><div class="tree r" style="left:1292px;top:339.8px">B1</div>
<div class="cb" style="left:1270px;top:363px"></div><div class="tree r" style="left:1292px;top:361.8px;text-decoration:underline">B2</div>
<div class="tri" style="left:1251px;top:386px"></div><div class="tree b" style="left:1270px;top:381.8px">Load effects</div>
<svg class="abs" style="left:1264px;top:401px" width="110" height="22"><polygon points="0,0 95,0 109.8,10.6 95,21.2 0,21.2" fill="#f07023"/></svg>
<div class="cb" style="left:1270px;top:407px;background:#f3e3d8"></div><div class="tree r" style="left:1292px;top:405.8px;color:#fff">LE1</div>
<div class="tri" style="left:1251px;top:430px"></div><div class="tree b" style="left:1270px;top:425.8px">Operations</div>
<div class="cb" style="left:1270px;top:451px"></div><div class="tree r" style="left:1292px;top:449.8px">PP1</div>
<svg class="abs" style="left:1268px;top:336px" width="20" height="130" fill="none" stroke="#f7941d" stroke-width="2"><path d="M4.6,9.6L7.8,13L14.4,3.6"/><path d="M4.6,31.6L7.8,35L14.4,25.6"/><path d="M4.6,75.6L7.8,79L14.4,69.6"/><path d="M4.6,119.6L7.8,123L14.4,113.6"/></svg>
<!--OVL-END-->
<!-- RIGHT PANEL -->
<div id="split"></div>
<div id="phdr"></div>
<!--PNL-START-->
<div class="abs" style="left:1404.5px;top:163px;color:#fff;font-weight:bold;font-size:11px;line-height:16px;letter-spacing:-.4px">LE1</div>
<div class="abs" style="left:1433px;top:163px;color:#fff;font-size:11.5px;line-height:16px">[ Load ]</div>
<div class="abs" style="left:1835.5px;top:163px;color:#fff;font-weight:bold;font-size:12px;line-height:16px">Copy</div>
<div class="abs" style="left:1873.5px;top:163px;color:#fff;font-weight:bold;font-size:12.5px;line-height:16px">Delete</div>
<table class="g" style="left:1404px;top:193px;width:391px;height:93px">
<colgroup><col style="width:29px"><col style="width:60px"><col style="width:50px"><col style="width:50px"><col style="width:50px"><col style="width:50px"><col style="width:50px"><col style="width:50px"><col style="width:3px"></colgroup>
<tr style="height:34px"><th></th><th style="padding-top:4px">Member</th><th>N<br>[kip]</th><th>Vy<br>[kip]</th><th>Vz<br>[kip]</th><th>Mx<br>[kip.ft]</th><th>My<br>[kip.ft]</th><th>Mz<br>[kip.ft]</th><th style="padding:0"></th></tr>
<tr style="height:29px;background:#dedede"><td></td><td style="background:#e6e6e6;outline:1.5px solid #f07023;outline-offset:-1.5px">B1 / End</td><td>400.00</td><td>0.00</td><td>-20.00</td><td>0.00</td><td>100.00</td><td>0.00</td><td style="padding:0"></td></tr>
<tr style="height:30px"><td></td><td>B2 / End</td><td>400.00</td><td>0.00</td><td>20.00</td><td>0.00</td><td>100.00</td><td>0.00</td><td style="padding:0"></td></tr>
</table>
<svg class="abs" style="left:1413px;top:234.5px" width="10" height="14" fill="none" stroke="#333" stroke-width="1.3"><path d="M2.4,2L7.4,7L2.4,12"/></svg>
<div class="redbox" style="left:1393.5px;top:184px;width:415.5px;height:115px;border-width:4px;border-radius:13px"></div>
<div class="abs" style="left:1404.5px;top:302.6px;width:340px;font-size:11.5px;line-height:15px;color:#444;letter-spacing:.08px">Values in disabled cells are not taken into account in CBFEM analysis. Members can be loaded only by that components of internal forces which are defined in member "Model type".</div>
<div class="abs" style="left:1404.5px;top:907px;font-size:13.5px;font-weight:bold;color:#333;line-height:16px;letter-spacing:.2px">Unbalanced forces</div>
<table class="g" style="left:1404px;top:924px;width:331px;height:63px">
<colgroup><col style="width:55px"><col style="width:55px"><col style="width:55px"><col style="width:55px"><col style="width:55px"><col style="width:57px"></colgroup>
<tr style="height:34px"><th>X<br>[kip]</th><th>Y<br>[kip]</th><th>Z<br>[kip]</th><th>Mx<br>[kip.ft]</th><th>My<br>[kip.ft]</th><th>Mz<br>[kip.ft]</th></tr>
<tr style="height:29px"><td>0.00</td><td>0.00</td><td>0.00</td><td>0.00</td><td>0.00</td><td>0.00</td></tr>
</table>
<div class="redbox" style="left:1393.5px;top:896px;width:354.5px;height:101.5px;border-width:4px;border-radius:13px"></div>
<!--PNL-END-->

<!-- STATUS -->
<div id="status">
<svg id="stex" class="abs" style="left:0;top:0" width="1920" height="32"><rect width="1920" height="32" filter="url(#brush)"/><rect width="1920" height="32" fill="url(#hfade)"/><rect width="1920" height="32" fill="url(#vfade)"/></svg>
<span class="sk" style="left:23px">Design code:</span><span class="sv" style="left:99px">AISC - LRFD (2022)</span>
<span class="sk" style="left:224px">Analysis:</span><span class="sv" style="left:275px">Stress, strain</span>
<span class="sk" style="left:366px">Load effects:</span><span class="sv" style="left:443px">In equilibrium</span>
<span class="sk" style="left:540px">Units:</span><span class="sv" style="left:580px">in</span>
<span style="left:1797px;color:#f07023;font-size:12px;top:11px">www.<span style="position:static;color:#fff">ideastatica</span>.com</span>
</div>
</body></html>
